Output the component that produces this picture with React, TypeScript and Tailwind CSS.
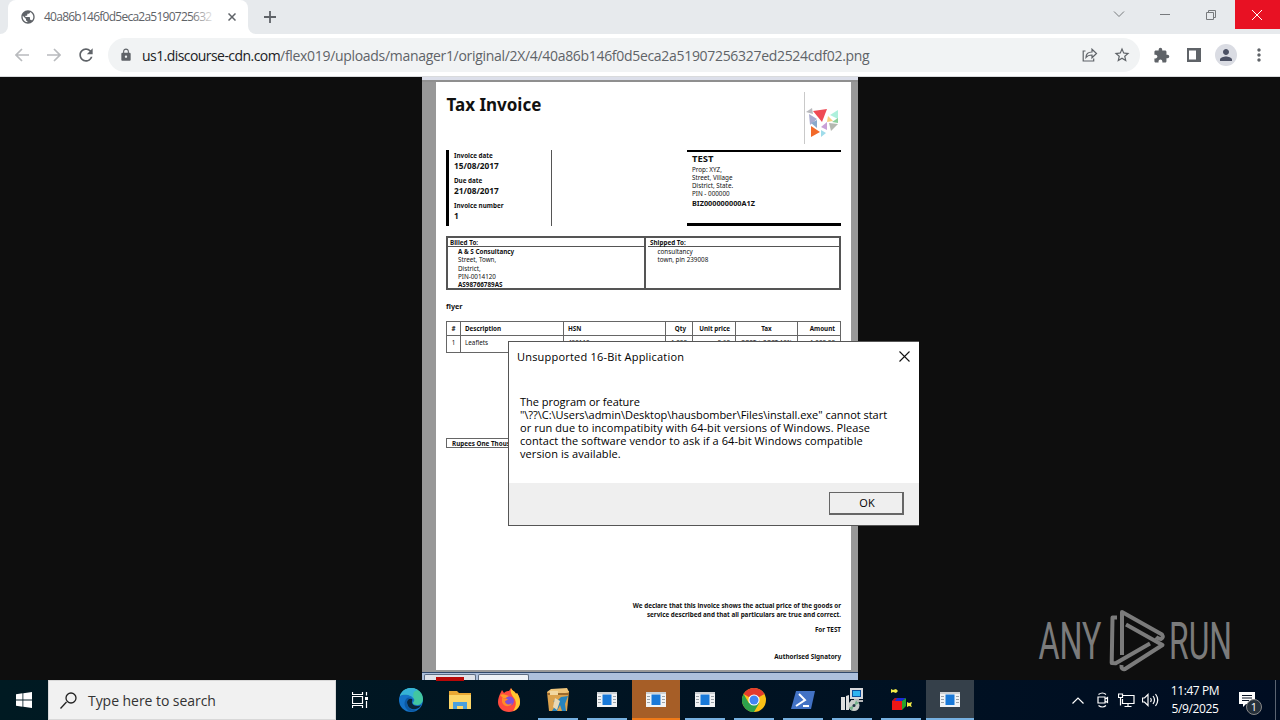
import type { ReactNode } from 'react';
import clsx from 'clsx';
import { MdExtension, MdLock, MdPerson, MdPublic, MdMoreVert, MdStarBorder, MdRefresh } from 'react-icons/md';

const columns = 'grid grid-cols-[14px_103px_102px_27px_43px_62px_1fr]';

function TabStrip() {
    return (
        <div className="flex h-[34px] bg-[#e7eaed] text-[#5f6368]">
            <div className="flex w-2 bg-white">
                <div className="flex-1 rounded-br-lg bg-[#e7eaed]" />
            </div>
            <div className="flex w-[240px] items-center rounded-t-lg bg-white pl-3">
                <MdPublic className="size-4 shrink-0" />
                <div className="relative ml-2 w-[170px] text-[12px] whitespace-nowrap">
                    <span className="tracking-[-0.75px]">40a86b146f0d5eca2a5190725632</span>
                    <div className="absolute inset-y-0 right-0 w-6 bg-gradient-to-r from-white/0 to-white/90" />
                </div>
                <svg viewBox="0 0 8 8" className="ml-[14px] size-2 shrink-0" stroke="currentColor" strokeWidth="1.5">
                    <path d="M.5.5l7 7M7.5.5l-7 7" />
                </svg>
            </div>
            <div className="flex w-2 bg-white">
                <div className="flex-1 rounded-bl-lg bg-[#e7eaed]" />
            </div>
            <svg viewBox="0 0 12 12" className="mt-[11px] ml-2 size-3" stroke="currentColor" strokeWidth="1.8">
                <path d="M6 0v12M0 6h12" />
            </svg>
            <div className="ml-auto flex h-[29px]">
                <div className="flex w-[46px] items-center justify-center pr-[2px]">
                    <svg viewBox="0 0 12 7" className="h-[7px] w-3" fill="none" stroke="#777a7d">
                        <path d="M1 .5l5 5 5-5" />
                    </svg>
                </div>
                <div className="flex w-[46px] items-center justify-center pr-[2px]">
                    <div className="h-px w-[10px] bg-[#777a7d]" />
                </div>
                <div className="flex w-[46px] items-center justify-center pr-[2px]">
                    <svg viewBox="0 0 10 10" className="size-[10px]" fill="none" stroke="#777a7d">
                        <path d="M.5 2.5h7v7h-7zM2.5 2.5v-2h7v7h-2" />
                    </svg>
                </div>
                <div className="flex w-[45px] items-center justify-center bg-[#e81123] pr-px">
                    <svg viewBox="0 0 10 10" className="size-[10px]" stroke="#fff">
                        <path d="M0 0l10 10M10 0L0 10" />
                    </svg>
                </div>
            </div>
        </div>
    );
}

function Toolbar() {
    return (
        <div className="flex h-[43px] items-center border-b border-[#d9dbdd] bg-white text-[#5f6368]">
            <svg viewBox="0 0 14 14" className="ml-[15px] size-[14px]" fill="none" stroke="#b9bbbe" strokeWidth="1.7">
                <path d="M14 7H1.5M7 1L1 7l6 6" />
            </svg>
            <svg viewBox="0 0 14 14" className="ml-[18px] size-[14px]" fill="none" stroke="#b9bbbe" strokeWidth="1.7">
                <path d="M0 7h12.5M7 1l6 6-6 6" />
            </svg>
            <MdRefresh className="ml-[15px] size-5" />
            <div className="ml-3 flex h-[34px] w-[1032px] items-center rounded-full bg-[#f1f3f4]">
                <MdLock className="ml-[11px] size-[14px]" />
                <span className="ml-[9px] text-[14px] tracking-[-0.31px] whitespace-nowrap">
                    <span className="tracking-[-0.56px] text-[#202124]">us1.discourse-cdn.com</span>
                    /flex019/uploads/manager1/original/2X/4/40a86b146f0d5eca2a51907256327ed2524cdf02.png
                </span>
                <svg viewBox="0 0 16 14" className="ml-auto h-[14px] w-4" fill="none" stroke="currentColor" strokeWidth="1.2">
                    <path d="M3.5 3H1.2v10h10.500v-2.500M4 9.500C4 6 6 4 10 4V1.200l4.500 4.300-4.500 4.300V7C7.500 7 5.500 7.500 4 9.500z" />
                </svg>
                <MdStarBorder className="mr-[9px] ml-[15px] size-[18px]" />
            </div>
            <MdExtension className="ml-[13px] size-[17px]" />
            <svg viewBox="0 0 14 14" className="ml-[17px] size-[14px]" fill="currentColor">
                <path d="M0 0h14v14H0zM2 2.500v9h7v-9z" fillRule="evenodd" />
            </svg>
            <div className="ml-[14px] flex size-[22px] items-center justify-center rounded-full bg-[#dadce3]">
                <MdPerson className="size-[18px] text-[#4c5164]" />
            </div>
            <MdMoreVert className="ml-3 size-5" />
        </div>
    );
}

function InvoiceLogo() {
    return (
        <svg viewBox="0 0 37 52" className="h-[52px] w-[37px]">
            <path d="M.5 0v52" stroke="#c9c9c9" />
            <path d="M2 20l6-4 1 6z" fill="#b9b9bd" />
            <path d="M9 19l14-2-5 13z" fill="#ef4a54" />
            <path d="M5 22l8 5-7 6z" fill="#a9abd0" />
            <path d="M7 31l6-3v8z" fill="#8aa9cc" />
            <path d="M7 34l9 6-9 5z" fill="#f26a2a" />
            <path d="M17 38l5 3-5 4z" fill="#9fdcea" />
            <path d="M23 30v8l-6-3z" fill="#c9a0d8" />
            <path d="M34 18v9l-8-4z" fill="#aef0dc" />
            <path d="M24 24l5 5-6 1z" fill="#f7cf80" />
            <path d="M28 30l6-4v5z" fill="#8ccf9a" />
            <path d="M25 31l9 1-7 7z" fill="#b4b8b0" />
        </svg>
    );
}

function DateField({ label, value }: { label: string; value: string }) {
    return (
        <div className="font-bold">
            <div className="text-[6.300px] leading-[11px]">{label}</div>
            <div className="text-[8.300px] leading-[9px]">{value}</div>
        </div>
    );
}

function Invoice() {
    return (
        <div className="mx-auto h-[603px] w-[436px] bg-[#989898] font-['Noto_Sans',sans-serif] text-[#111]">
            <div className="h-[3px] bg-[#dcdfea]" />
            <div className="h-[2px] bg-[#8f8f8f]" />
            <div className="mr-[7px] ml-[14px] flex h-[588px] flex-col bg-white px-[10px]">
                <div className="flex h-[68px] justify-between">
                    <h1 className="mt-[10px] pl-[0.500px] text-[17px] leading-[25px] font-bold">Tax Invoice</h1>
                    <div className="mt-[10px]">
                        <InvoiceLogo />
                    </div>
                </div>
                <div className="flex h-[76px] justify-between">
                    <div className="flex w-[106px] flex-col gap-[5px] border-r border-l-[3px] border-r-[#555] border-l-black pl-[5px]">
                        <DateField label="Invoice date" value="15/08/2017" />
                        <DateField label="Due date" value="21/08/2017" />
                        <DateField label="Invoice number" value="1" />
                    </div>
                    <div className="w-[154px] border-t-2 border-b-[3px] border-black pl-[5px] text-[6.300px] leading-[8.300px]">
                        <div className="text-[9.500px] leading-[13.500px] font-bold">TEST</div>
                        <div>Prop: XYZ,</div>
                        <div>Street, Village</div>
                        <div>District, State.</div>
                        <div>PIN - 000000</div>
                        <div className="text-[7.300px] leading-[9px] font-bold">BIZ000000000A1Z</div>
                    </div>
                </div>
                <div className="mt-[10px] grid h-[54px] grid-cols-[198px_1fr] border-2 border-[#555] text-[6.300px] leading-[8.300px]">
                    <div className="border-r-2 border-[#555]">
                        <div className="h-[9px] border-b border-[#555] pl-[2px] leading-[9px] font-bold">Billed To:</div>
                        <div className="pt-px pl-[10px]">
                            <div className="font-bold">A &amp; S Consultancy</div>
                            <div>Street, Town,</div>
                            <div>District,</div>
                            <div>PIN-0014120</div>
                            <div className="font-bold">AS98766789AS</div>
                        </div>
                    </div>
                    <div>
                        <div className="ml-[2px] h-[9px] border-b border-[#555] pl-[2px] leading-[9px] font-bold">Shipped To:</div>
                        <div className="pt-px pl-[11.500px]">
                            <div>consultancy</div>
                            <div>town, pin 239008</div>
                        </div>
                    </div>
                </div>
                <div className="mt-[10px] text-[7.200px] leading-[12px] font-bold">flyer</div>
                <div className="mt-[9px] h-8 border border-[#666] text-[6.300px]">
                    <div className={clsx(columns, 'h-[14px] divide-x divide-[#666] border-b border-[#666] leading-[14px] font-bold')}>
                        <div className="text-center">#</div>
                        <div className="pl-1">Description</div>
                        <div className="pl-1">HSN</div>
                        <div className="pr-[6px] text-right">Qty</div>
                        <div className="pr-[5px] text-right">Unit price</div>
                        <div className="text-center">Tax</div>
                        <div className="pr-[5px] text-right">Amount</div>
                    </div>
                    <div className={clsx(columns, 'h-4 divide-x divide-[#666] leading-[14px]')}>
                        <div className="text-center">1</div>
                        <div className="pl-1">Leaflets</div>
                        <div className="pl-1">490110</div>
                        <div className="pr-[5px] text-right">1,000</div>
                        <div className="pr-[5px] text-right">0.60</div>
                        <div className="text-center">CGST + SGST 18%</div>
                        <div className="pr-[5px] text-right">1,000.00</div>
                    </div>
                </div>
                <div className="mt-[85px] h-[10px] border border-[#666] pl-[5px] text-[6.300px] leading-[9px] font-bold">
                    Rupees One Thousand
                </div>
                <div className="mt-auto text-right text-[6.300px] leading-[9px] font-bold">
                    <div>We declare that this invoice shows the actual price of the goods or</div>
                    <div>service described and that all particulars are true and correct.</div>
                    <div className="mt-[6px]">For TEST</div>
                    <div className="mt-[18px] mb-[9.500px]">Authorised Signatory</div>
                </div>
            </div>
            <div className="h-[2px]" />
            <div className="flex h-2 border-t border-[#30486b] bg-[#adc0dc] pl-[2px]">
                <div className="mt-px w-[52px] rounded-t-[2px] border border-b-0 border-[#5d6c82] bg-[#dfe3ea] px-[11px] pt-[2px]">
                    <div className="h-1 bg-[#b80808]" />
                </div>
                <div className="mt-px ml-[2px] w-[51px] rounded-t-[2px] border border-b-0 border-[#5d6c82] bg-[#eef2f7]" />
            </div>
        </div>
    );
}

function ErrorDialog() {
    return (
        <div className="absolute top-[341px] left-[508px] flex h-[185px] w-[411px] flex-col border border-r-0 border-[#555] bg-white text-[11px] text-black">
            <div className="flex h-[29px] items-center justify-between pr-[9.500px] pl-2">
                <span className="pt-px tracking-[0.2px]">Unsupported 16-Bit Application</span>
                <svg viewBox="0 0 11 11" className="size-[11px]" stroke="#111" strokeWidth="1.100">
                    <path d="M.5.5l10 10M10.500.5l-10 10" />
                </svg>
            </div>
            <p className="mt-6 pl-[11px] leading-[13px] tracking-[0.070px] whitespace-nowrap">
                <span className="tracking-[-0.030px]">The program or feature</span>
                <br />
                <span className="tracking-[-0.030px]">
                    "\??\C:\Users\admin\Desktop\hausbomber\Files\install.exe" cannot start
                </span>
                <br />
                or run due to incompatibity with 64-bit versions of Windows. Please
                <br />
                contact the software vendor to ask if a 64-bit Windows compatible
                <br />
                version is available.
            </p>
            <div className="mt-auto flex h-[42px] justify-end bg-[#efefef] pt-[9px] pr-[15px]">
                <button className="h-[23px] w-[75px] border border-r-2 border-b-2 border-[#666] bg-[#efefef] pl-[2px] leading-[20px]">
                    OK
                </button>
            </div>
        </div>
    );
}

function Watermark() {
    return (
        <svg
            viewBox="0 0 200 72"
            className="absolute top-[608px] left-[1035px] h-[72px] w-[200px] overflow-visible font-['Roboto',sans-serif]"
            fill="#7b7b7b"
        >
            <text x="3.500" y="51" fontSize="52" textLength="63" lengthAdjust="spacingAndGlyphs">
                ANY
            </text>
            <text x="134" y="51" fontSize="52" textLength="63" lengthAdjust="spacingAndGlyphs">
                RUN
            </text>
            <g fill="none" stroke="#7b7b7b" strokeWidth="4" strokeLinejoin="round">
                <path d="M82 9.500h-4.500l-.8 45.500 4 .2L115 35.500" />
                <path d="M87 47V4l40 22.500q2 3-1 4.500-3 0-5-2" />
                <path d="M91 16.500L127.500 37 90 61q-4 1-3.500-4" />
            </g>
        </svg>
    );
}

function AppWindowIcon() {
    return (
        <svg viewBox="0 0 22 18" className="h-[18px] w-[22px]">
            <path d="M1 1h20v15H1z" fill="#f1f3f4" />
            <path d="M1 1h20v2H1z" fill="#cdd1d4" />
            <path d="M2 5.500h3M2 8.500h3M2 11.500h3M17 5.500h3M17 8.500h3M17 11.500h3" stroke="#9aa1a7" />
            <path d="M6.500 3.500h9V14h-9z" fill="#1979d8" />
        </svg>
    );
}

function TaskButton({ children, state }: { children: ReactNode; state?: 'running' | 'alert' | 'active' }) {
    return (
        <div
            className={clsx(
                'flex h-10 w-12 shrink-0 flex-col items-center',
                state === 'alert' && 'bg-[#a65e27]',
                state === 'active' && 'bg-[#35404a]',
            )}
        >
            <div className="flex h-[38px] items-center pt-[2px]">{children}</div>
            {state && (
                <div
                    className={clsx(
                        'h-[2px]',
                        state === 'running' && 'w-10 bg-[#76b0e0]',
                        state === 'alert' && 'w-12 bg-[#f07a18]',
                        state === 'active' && 'w-12 bg-[#76b0e0]',
                    )}
                />
            )}
        </div>
    );
}

function Taskbar() {
    return (
        <div className="flex h-10 bg-gradient-to-r from-[#001a22] to-[#000d22] text-white">
            <div className="flex w-12 items-center justify-center">
                <svg viewBox="0 0 16 16" className="size-4" fill="#fff">
                    <path d="M0 2.200l6.500-.9v6.300H0zM7.300 1.200L16 0v7.600H7.300zM0 8.400h6.500v6.300L0 13.800zM7.300 8.400H16V16l-8.700-1.200z" />
                </svg>
            </div>
            <div className="flex w-[288px] items-center border border-[#d8d8d8] bg-[#f1f1f1] pl-[11px] text-[#333]">
                <svg viewBox="0 0 17 17" className="size-[17px]" fill="none" stroke="#222" strokeWidth="1.300">
                    <path d="M.5 16.500l6-6.500" />
                    <circle cx="11" cy="6" r="5" />
                </svg>
                <span className="ml-[11px] pt-px text-[14px] tracking-[-0.050px]">Type here to search</span>
            </div>
            <div className="flex gap-px">
                <div className="mr-[2px]">
                    <TaskButton>
                        <svg viewBox="0 0 16 16" className="size-4" fill="none" stroke="#fff" strokeWidth="1.200">
                            <path d="M.5 0v2.500h10V0M.5 16v-2.500h10V16M.5 4.500h10v7H.5zM14.500 0v3.500M14.500 9v7" />
                            <path d="M13 5h3v3h-3z" fill="#fff" stroke="none" />
                        </svg>
                    </TaskButton>
                </div>
                <TaskButton>
                    <svg viewBox="0 0 24 24" className="size-6">
                        <circle cx="12" cy="12" r="12" fill="#1473c8" />
                        <path d="M1 8C3 2 8 0 12 0c7 0 12 5 12 11 0 4-3 6-6 6-3 0-4-1-4-2s2-2 1-4C13 7 5 5 1 8z" fill="#42c6a0" />
                        <path d="M1 8C3 2 8 0 12 0c3 0 5 .8 7 2-6 1-5 5-4 9C13 7 5 5 1 8z" fill="#35b2d8" />
                        <path d="M8 14c0 6 5 8 9 7 3-.7 4-2 5-4-3 2-8 1-9-2-.5-2 1-3 0-4-2-1-5 0-5 3z" fill="#0a2438" />
                        <path d="M8 14c0 6 5 9 10 8-2 1.500-5 2-8 1-5-3-6-9-2-13 1-.8 3-.8 4 0-2 .5-4 2-4 4z" fill="#0c59a4" />
                    </svg>
                </TaskButton>
                <TaskButton>
                    <svg viewBox="0 0 22 18" className="h-[18px] w-[22px]">
                        <path d="M0 0h8l2 2h12v16H0z" fill="#e9a833" />
                        <path d="M0 4h22v14H0z" fill="#fcd668" />
                        <path d="M4 18v-7h14v7h-4v-3H8v3z" fill="#4a9fdd" />
                    </svg>
                </TaskButton>
                <TaskButton>
                    <svg viewBox="0 0 24 24" className="size-6">
                        <path d="M3 6l2-4 2 3c2-2 4-2 5-2l2-3c1 3 4 3 5 6l1-1c2 3 3 6 3 9 0 6-5 10-11 10S1 20 1 14c0-3 1-6 2-8z" fill="#ff4b3e" />
                        <path d="M14 0c1 3 4 3 5 6l1-1c2 3 3 6 3 9 0 5-3 8-7 9 3-4 4-9 1-13-2-3-4-5-3-10z" fill="#ffc72f" />
                        <path d="M3 7c2-1 4-1 6 0l3 1-3 2H6z" fill="#ff9b28" />
                        <circle cx="12.500" cy="13" r="4.500" fill="#8050d8" />
                        <path d="M5 10c3 0 4 1 6 1-1 2-3 1-3 3 1 3 5 3 7 1-1 4-8 5-10-1z" fill="#ff8a2a" />
                    </svg>
                </TaskButton>
                <TaskButton state="running">
                    <svg viewBox="0 0 24 24" className="size-6">
                        <path d="M1 4l22-1-2 20H3z" fill="#dca24c" />
                        <path d="M1 4l4-3 16-1 2 4-11 3z" fill="#edc47b" />
                        <path d="M1 5h22v2H1z" fill="#9b6a2d" />
                        <path d="M15 9l7-1-3 8 1 7h-4l-2-6-3 6H6l5-8-4-2 5-1z" fill="#2583bd" />
                        <path d="M9 10l5 3-3 9-4-3z" fill="#e9d8b5" />
                        <path d="M4 3h8v4H4z" fill="#f2d7a1" />
                    </svg>
                </TaskButton>
                <TaskButton state="running">
                    <AppWindowIcon />
                </TaskButton>
                <TaskButton state="alert">
                    <AppWindowIcon />
                </TaskButton>
                <TaskButton state="running">
                    <AppWindowIcon />
                </TaskButton>
                <TaskButton state="running">
                    <svg viewBox="0 0 24 24" className="size-6">
                        <circle cx="12" cy="12" r="12" fill="#fbc116" />
                        <path d="M12 12L1.600 6A12 12 0 0 1 22.400 6z" fill="#e33b2e" />
                        <path d="M1.600 6A12 12 0 0 0 12 24l5.200-9L12 12l-5.200 3z" fill="#2da24c" />
                        <circle cx="12" cy="12" r="5.600" fill="#fff" />
                        <circle cx="12" cy="12" r="4.500" fill="#4285f4" />
                    </svg>
                </TaskButton>
                <TaskButton state="running">
                    <svg viewBox="0 0 24 18" className="h-[18px] w-6">
                        <path d="M5 0h19l-4 18H0z" fill="#4272c4" />
                        <path d="M8 3l6 6-9 6M12 15h6" fill="none" stroke="#fff" strokeWidth="2" />
                    </svg>
                </TaskButton>
                <TaskButton state="running">
                    <svg viewBox="0 0 22 24" className="h-6 w-[22px]">
                        <path d="M9 0h13v11H9z" fill="#d7d9dc" />
                        <path d="M11 2h9v7h-9z" fill="#0b4f9c" />
                        <path d="M12 3h7v5h-7z" fill="#2fb4f0" />
                        <path d="M13 11h5v1h4v2H10v-2h3z" fill="#b7b8ba" />
                        <path d="M0 9h4v13H0zM5 8l3-1v15H5z" fill="#dedede" />
                        <circle cx="13" cy="17.500" r="5.500" fill="#c9cdc9" />
                        <path d="M13 17.500l2-5 3 3zM13 17.500l-2 5-3-3z" fill="#75b28a" />
                        <circle cx="13" cy="17.500" r="1.500" fill="#234" />
                    </svg>
                </TaskButton>
                <TaskButton state="running">
                    <svg viewBox="0 0 22 22" className="size-[22px]">
                        <path d="M1 0l2 1 3-1 2 2-2 2-3-1-2 1zM17 13l2 1 3-1-1 3 1 2-3-1-2 1z" fill="#f5ee46" />
                        <path d="M2 12h10v9H2z" fill="#ef1616" />
                        <path d="M2 12l3-3h11l-4 3z" fill="#1a2bd8" />
                        <path d="M12 12l4-3v8l-4 4z" fill="#26a52c" />
                        <path d="M2 12l3-3h2l-2 3z" fill="#c01010" />
                    </svg>
                </TaskButton>
                <TaskButton state="active">
                    <AppWindowIcon />
                </TaskButton>
            </div>
            <div className="ml-auto flex items-center">
                <svg viewBox="0 0 12 7" className="h-[7px] w-3" fill="none" stroke="#fff" strokeWidth="1.200">
                    <path d="M.5 6.500L6 1l5.500 5.500" />
                </svg>
                <svg viewBox="0 0 13 16" className="ml-3 h-4 w-[13px]" fill="none" stroke="#fff" strokeWidth="1.200">
                    <path d="M2 5h7v6H2zM9 7l2.500-1.500v5L9 9M2.500 2.500Q6.500-.5 10 2.500M2.500 13.500q4 3 7.500 0" />
                </svg>
                <svg viewBox="0 0 17 14" className="ml-[9px] h-[14px] w-[17px]" fill="none" stroke="#fff" strokeWidth="1.200">
                    <path d="M5 2.500h11v8H4.500V6M.5 1h4v3.500h-4zM2.500 4.500v8M10 10.500v3M6.500 13.500h7" />
                </svg>
                <svg viewBox="0 0 17 14" className="ml-[7px] h-[14px] w-[17px]" fill="none" stroke="#fff" strokeWidth="1.200">
                    <path d="M.5 5h2L6 1.500v11L2.500 9h-2zM8.500 5q1.500 2 0 4M11 3q3 4 0 8M13.500 1q4.500 6 0 12" />
                </svg>
                <div className="ml-[10px] w-[52px] text-center text-[12px] leading-[18px] tracking-[-0.4px] whitespace-nowrap">
                    <div>11:47 PM</div>
                    <div>5/9/2025</div>
                </div>
                <div className="relative ml-[18px]">
                    <svg viewBox="0 0 16 16" className="size-4">
                        <path d="M0 0h16v12H7l-3 3v-3H0z" fill="#fff" />
                        <path d="M3 3.500h10M3 6h10M3 8.500h7" stroke="#0a1526" />
                    </svg>
                    <div className="absolute top-[7px] left-[7px] size-4 rounded-full border border-[#888] bg-[#26303a] text-center text-[11px] leading-[14px]">
                        1
                    </div>
                </div>
                <div className="ml-5 h-10 w-px bg-[#5b6472]" />
                <div className="w-1" />
            </div>
        </div>
    );
}

export default function App() {
    return (
        <div className="relative h-[720px] w-[1280px] overflow-hidden bg-[#0e0e0e] font-['Open_Sans',sans-serif]">
            <TabStrip />
            <Toolbar />
            <Invoice />
            <Taskbar />
            <ErrorDialog />
            <Watermark />
        </div>
    );
}
